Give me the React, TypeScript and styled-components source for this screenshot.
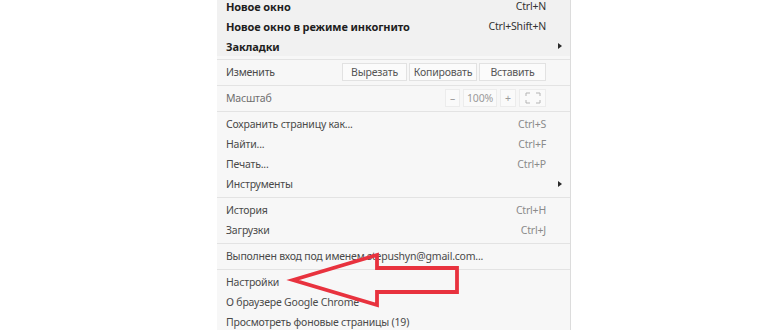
import React from "react";
import styled, { createGlobalStyle } from "styled-components";

const GlobalStyle = createGlobalStyle`
  html, body {
    margin: 0;
    padding: 0;
    background: #ffffff;
    overflow: hidden;
  }
  body {
    font-family: "Noto Sans", "Open Sans", sans-serif;
  }
`;

const Page = styled.div`
  position: relative;
  width: 770px;
  height: 330px;
  overflow: hidden;
  display: flex;
  align-items: flex-start;
  padding-left: 217px;
  box-sizing: border-box;
`;

const Menu = styled.div`
  width: 354px;
  margin-top: -4px;
  background: #f7f7f7;
  border-right: 1px solid #dcdcdc;
  box-sizing: border-box;
  display: flex;
  flex-direction: column;
`;

const Section = styled.div<{ $shade?: boolean }>`
  display: flex;
  flex-direction: column;
  background: ${(p) => (p.$shade ? "#f1f1f1" : "transparent")};
`;

const Row = styled.div`
  height: 20px;
  display: flex;
  align-items: center;
  padding: 0 24px 0 9px;
  font-size: 10.5px;
  letter-spacing: -0.2px;
  color: #4a4a4a;
  position: relative;
`;

const Label = styled.span<{ $bold?: boolean; $muted?: boolean }>`
  flex: 1;
  white-space: nowrap;
  font-weight: ${(p) => (p.$bold ? 700 : 400)};
  font-size: ${(p) => (p.$bold ? "11px" : "inherit")};
  letter-spacing: ${(p) => (p.$bold ? "-0.1px" : "inherit")};
  color: ${(p) => (p.$bold ? "#1e1e1e" : p.$muted ? "#6e6e6e" : "#4a4a4a")};
`;

const Shortcut = styled.span<{ $dark?: boolean }>`
  white-space: nowrap;
  color: ${(p) => (p.$dark ? "#333" : "#8a8a8a")};
`;

const SubArrow = styled.span`
  position: absolute;
  right: 8px;
  top: 7px;
  width: 0;
  height: 0;
  border-top: 3px solid transparent;
  border-bottom: 3px solid transparent;
  border-left: 4px solid #2a2a2a;
`;

const Separator = styled.div`
  height: 6px;
  display: flex;
  align-items: center;
  &::after {
    content: "";
    flex: 1;
    height: 1px;
    background: #e3e3e3;
  }
`;

const ButtonGroup = styled.div`
  display: flex;
  gap: 2px;
`;

const EditButton = styled.span<{ $w: number }>`
  width: ${(p) => p.$w}px;
  height: 18px;
  display: flex;
  align-items: center;
  justify-content: center;
  border: 1px solid #e2e2e2;
  background: #fbfbfb;
  color: #555;
  box-sizing: border-box;
`;

const ZoomGroup = styled.div`
  display: flex;
  align-items: center;
  gap: 3px;
`;

const ZoomBox = styled.span<{ $w: number }>`
  width: ${(p) => p.$w}px;
  height: 18px;
  display: flex;
  align-items: center;
  justify-content: center;
  border: 1px solid #ececec;
  background: #fafafa;
  color: #9a9a9a;
  box-sizing: border-box;
`;

const Overlay = styled.svg`
  position: absolute;
  left: 0;
  top: 0;
  pointer-events: none;
`;

type Item = { label: string; shortcut?: string; sub?: boolean; bold?: boolean };

const MenuRow = ({ label, shortcut, sub, bold }: Item) => (
  <Row>
    <Label $bold={bold}>{label}</Label>
    {shortcut && <Shortcut $dark={bold}>{shortcut}</Shortcut>}
    {sub && <SubArrow />}
  </Row>
);

const FullscreenIcon = () => (
  <svg width="16" height="12" viewBox="0 0 16 12">
    <path
      d="M1 4V1h4M11 1h4v3M15 8v3h-4M5 11H1V8"
      fill="none"
      stroke="#b4b4b4"
      strokeWidth="1"
    />
  </svg>
);

export default function App() {
  return (
    <>
      <GlobalStyle />
      <Page>
        <Menu>
          <Section $shade>
            <MenuRow label="Новое окно" shortcut="Ctrl+N" bold />
            <MenuRow label="Новое окно в режиме инкогнито" shortcut="Ctrl+Shift+N" bold />
            <MenuRow label="Закладки" sub bold />
          </Section>
          <Separator />
          <Row>
            <Label>Изменить</Label>
            <ButtonGroup>
              <EditButton $w={65}>Вырезать</EditButton>
              <EditButton $w={68}>Копировать</EditButton>
              <EditButton $w={67}>Вставить</EditButton>
            </ButtonGroup>
          </Row>
          <Separator />
          <Row>
            <Label $muted>Масштаб</Label>
            <ZoomGroup>
              <ZoomBox $w={15}>–</ZoomBox>
              <ZoomBox $w={34}>100%</ZoomBox>
              <ZoomBox $w={16}>+</ZoomBox>
              <ZoomBox $w={27}>
                <FullscreenIcon />
              </ZoomBox>
            </ZoomGroup>
          </Row>
          <Separator />
          <MenuRow label="Сохранить страницу как..." shortcut="Ctrl+S" />
          <MenuRow label="Найти..." shortcut="Ctrl+F" />
          <MenuRow label="Печать..." shortcut="Ctrl+P" />
          <MenuRow label="Инструменты" sub />
          <Separator />
          <MenuRow label="История" shortcut="Ctrl+H" />
          <MenuRow label="Загрузки" shortcut="Ctrl+J" />
          <Separator />
          <MenuRow label="Выполнен вход под именем stepushyn@gmail.com..." />
          <Separator />
          <MenuRow label="Настройки" />
          <MenuRow label="О браузере Google Chrome" />
          <MenuRow label="Просмотреть фоновые страницы (19)" />
        </Menu>
        <Overlay width="770" height="330" viewBox="0 0 770 330">
          <polygon
            points="293,280 377,255 377,268 457,268 457,292 377,292 377,305"
            fill="none"
            stroke="#e8323e"
            strokeWidth="3.8"
            strokeLinejoin="miter"
          />
        </Overlay>
      </Page>
    </>
  );
}
